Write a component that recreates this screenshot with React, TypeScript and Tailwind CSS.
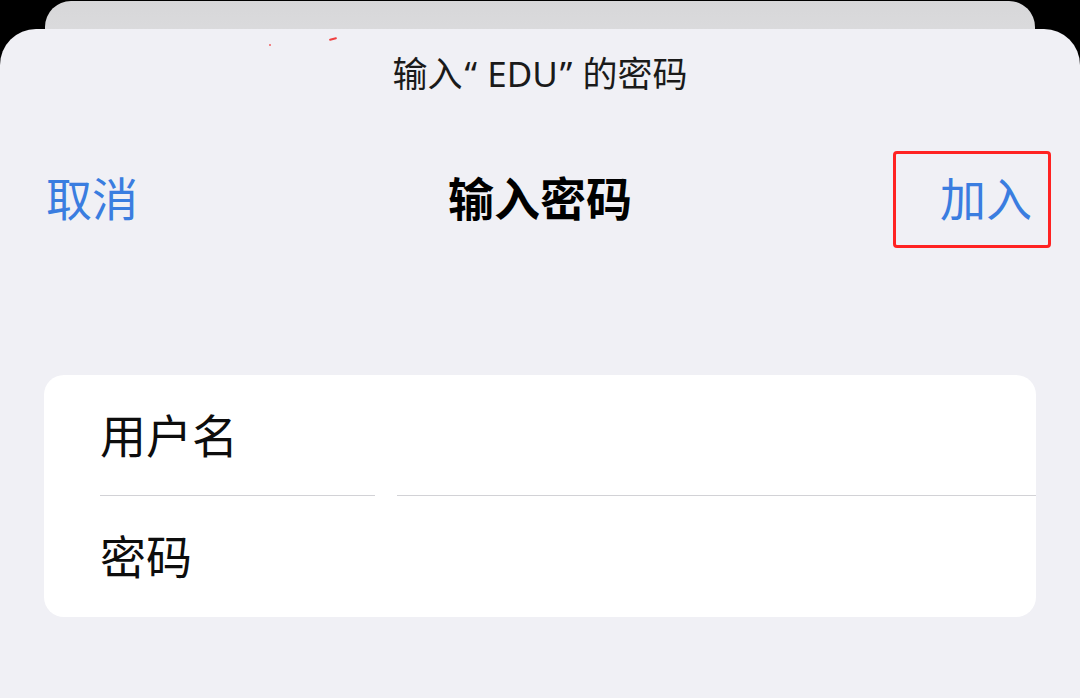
import React from "react"

const font = { fontFamily: '"Noto Sans CJK SC", "Noto Sans", sans-serif' }
const latinFirst = { fontFamily: '"Noto Sans", "Noto Sans CJK SC", sans-serif' }

function FieldRow({ label, divider }: { label: string; divider?: boolean }) {
  return (
    <div className="relative flex h-[121px] items-center pl-[56px]">
      <span className="pb-[5px] text-[46px] leading-none text-[#0d0d0d]">{label}</span>
      {divider && (
        <div className="absolute bottom-0 left-[56px] right-0 flex h-px">
          <div className="w-[275px] bg-[#d2d2d6]" />
          <div className="w-[22px]" />
          <div className="flex-1 bg-[#d2d2d6]" />
        </div>
      )}
    </div>
  )
}

export default function App() {
  return (
    <div className="h-[698px] w-[1080px] overflow-hidden bg-black pt-px" style={font}>
      {/* sheet behind */}
      <div className="mx-[45px] h-[60px] rounded-t-[26px] bg-gradient-to-b from-[#d7d7d9] to-[#dedee0]" />

      {/* front sheet */}
      <div className="relative -mt-[32px] h-[700px] rounded-t-[36px] bg-[#f0f0f5] pt-[25px]">
        {/* compression specks */}
        <span className="absolute left-[329px] top-[9px] h-[2px] w-[8px] rotate-[-15deg] rounded-full bg-[#f04040]" />
        <span className="absolute left-[269px] top-[15px] h-[2px] w-[2px] rounded-full bg-[#f06060]" />

        <div className="h-[40px] text-center text-[35px] leading-[40px] text-[#1a1a1a]" style={latinFirst}>
          输入<span className="pl-[2px] pr-[10px]">“</span>EDU<span className="pl-[2px] pr-[10px]">”</span>的密码
        </div>

        <div className="mt-[57px] grid grid-cols-[1fr_auto_1fr] items-center px-[29px]">
          <div className="pb-[7px] pl-[17px] text-[46px] leading-none text-[#3a7de0]">取消</div>
          <div className="pb-[7px] text-[46px] font-bold leading-none text-black">输入密码</div>
          <div className="flex justify-end">
            <div className="flex h-[97px] w-[158px] items-center justify-end rounded-[4px] border-[3px] border-[#ff2222] pr-[16px]">
              <span className="pb-[7px] text-[46px] leading-none text-[#3a7de0]">加入</span>
            </div>
          </div>
        </div>

        <div className="mx-[44px] mt-[127px] overflow-hidden rounded-[20px] bg-white">
          <FieldRow label="用户名" divider />
          <FieldRow label="密码" />
        </div>
      </div>
    </div>
  )
}
